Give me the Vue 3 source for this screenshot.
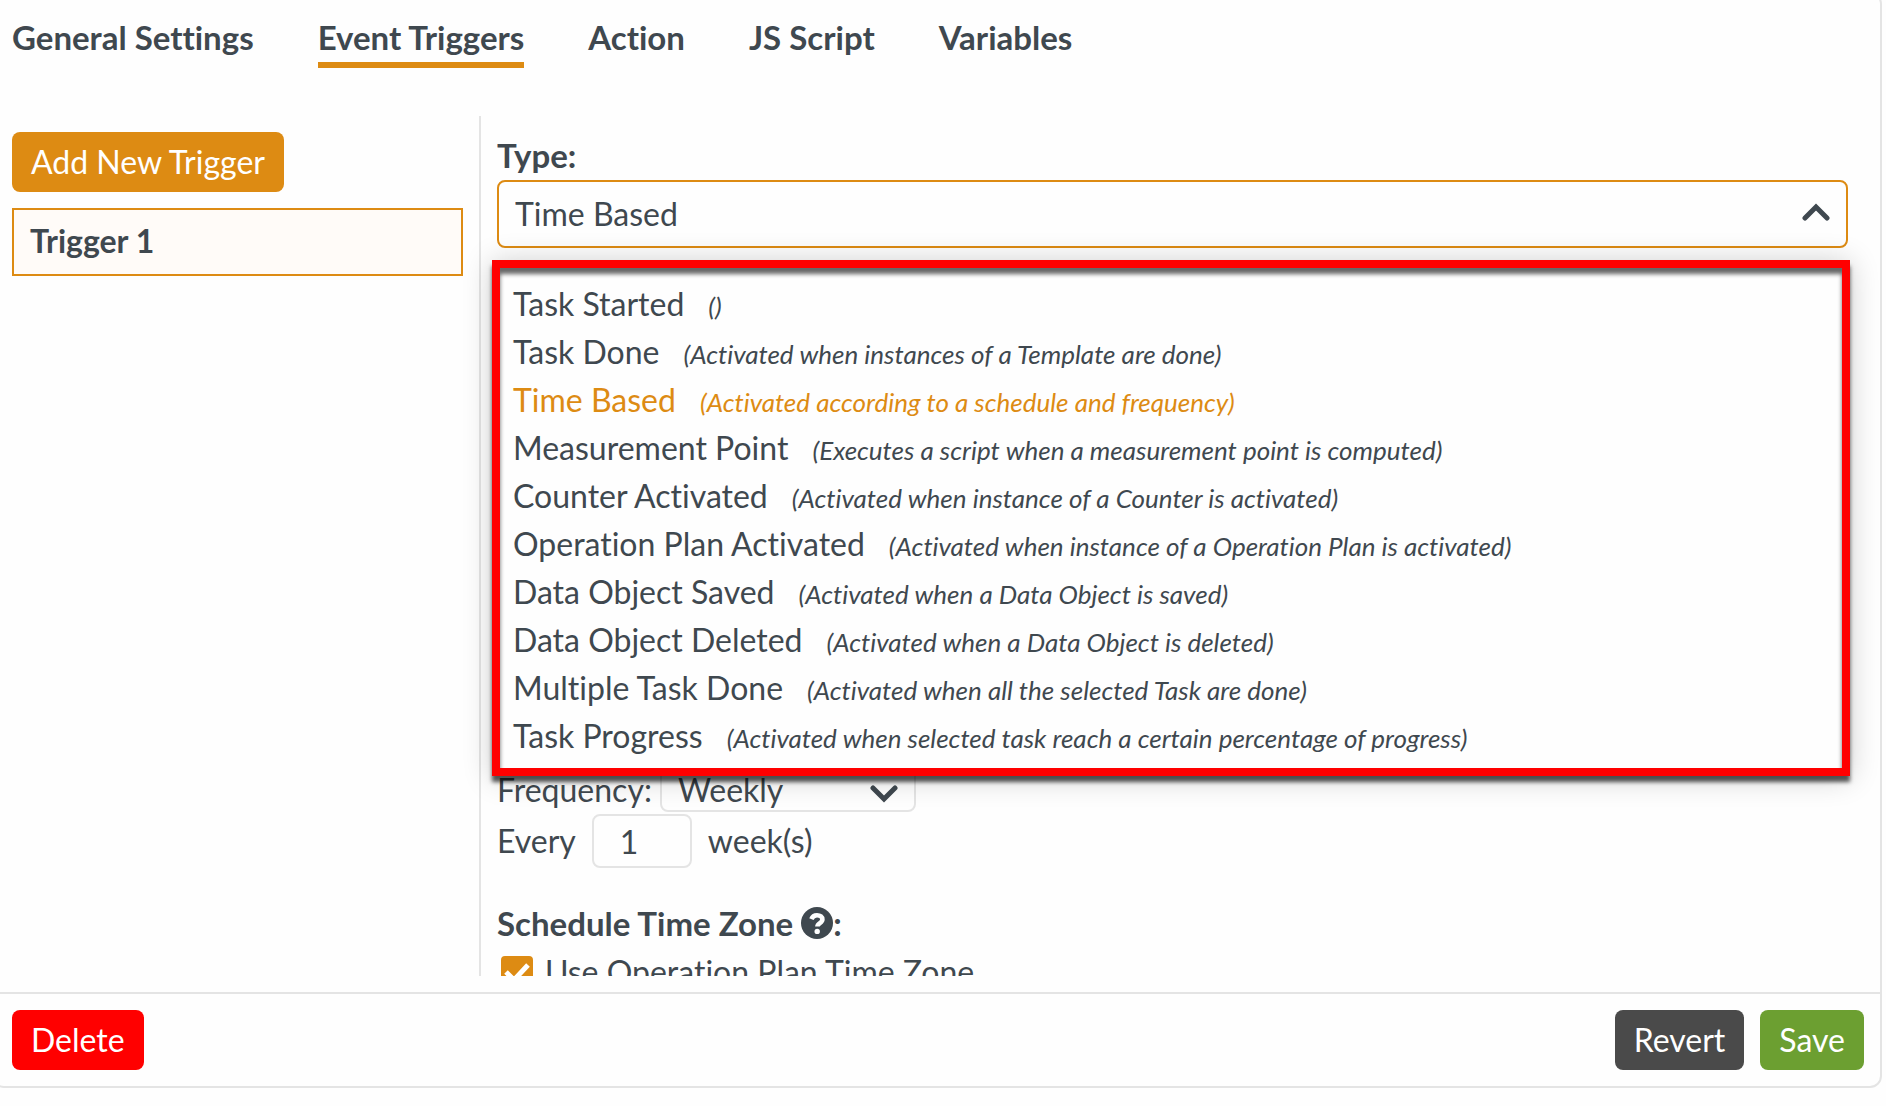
<script setup>
import { ref } from 'vue'

const tabs = ['General Settings', 'Event Triggers', 'Action', 'JS Script', 'Variables']
const activeTab = ref('Event Triggers')

const triggerTypes = [
  { name: 'Task Started', hint: '' },
  { name: 'Task Done', hint: 'Activated when instances of a Template are done' },
  { name: 'Time Based', hint: 'Activated according to a schedule and frequency' },
  { name: 'Measurement Point', hint: 'Executes a script when a measurement point is computed' },
  { name: 'Counter Activated', hint: 'Activated when instance of a Counter is activated' },
  { name: 'Operation Plan Activated', hint: 'Activated when instance of a Operation Plan is activated' },
  { name: 'Data Object Saved', hint: 'Activated when a Data Object is saved' },
  { name: 'Data Object Deleted', hint: 'Activated when a Data Object is deleted' },
  { name: 'Multiple Task Done', hint: 'Activated when all the selected Task are done' },
  { name: 'Task Progress', hint: 'Activated when selected task reach a certain percentage of progress' },
]
const type = ref('Time Based')
const frequency = ref('Weekly')
const every = ref('1')
const usePlanZone = ref(true)
</script>

<template>
  <main class="panel">
    <nav class="tabs">
      <a
        v-for="tab in tabs"
        :key="tab"
        href="#"
        class="tab"
        :class="{ active: tab === activeTab }"
        @click.prevent="activeTab = tab"
      >{{ tab }}</a>
    </nav>

    <div class="body">
      <aside class="sidebar">
        <button type="button" class="btn btn-add">Add New Trigger</button>
        <a href="#" class="trigger">Trigger 1</a>
      </aside>

      <section class="editor">
        <label class="heading" for="type">Type:</label>
        <div class="type-field">
          <select id="type" v-model="type" class="select select-type">
            <option v-for="t in triggerTypes" :key="t.name">{{ t.name }}</option>
          </select>
          <svg class="chevron" viewBox="0 0 28 18" aria-hidden="true">
            <path d="M3 15 14 4l11 11" />
          </svg>
          <ul class="menu" role="listbox" aria-label="Type">
            <li
              v-for="t in triggerTypes"
              :key="t.name"
              class="option"
              :class="{ selected: t.name === type }"
              role="option"
              :aria-selected="t.name === type"
              @click="type = t.name"
            >
              <span>{{ t.name }}</span>
              <em class="hint">({{ t.hint }})</em>
            </li>
          </ul>
        </div>

        <div class="schedule">
          <div class="row row-frequency">
            <label for="frequency">Frequency:</label>
            <div class="select-wrap">
              <select id="frequency" v-model="frequency" class="select select-small">
                <option>Daily</option>
                <option>Weekly</option>
                <option>Monthly</option>
              </select>
              <svg class="chevron chevron-small" viewBox="0 0 28 18" aria-hidden="true">
                <path d="m3 3 11 11L25 3" />
              </svg>
            </div>
          </div>
          <div class="row row-every">
            <label for="every">Every</label>
            <input id="every" v-model="every" type="text" class="number" />
            <span>week(s)</span>
          </div>
        </div>

        <h2 class="heading zone">
          Schedule Time Zone
          <svg class="help" viewBox="0 0 32 32" aria-hidden="true">
            <circle cx="16" cy="16" r="16" />
            <path d="M10.4 12.2C11.4 9.6 13.2 8.2 16 8.2c3.2 0 5.4 1.8 5.4 4.3 0 3.6-5 3.5-5 7" />
            <circle class="dot" cx="16.2" cy="24.4" r="2.7" />
          </svg>:
        </h2>
        <label class="check">
          <input v-model="usePlanZone" type="checkbox" />
          <span>Use Operation Plan Time Zone</span>
        </label>
      </section>
    </div>

    <footer class="footer">
      <button type="button" class="btn btn-delete">Delete</button>
      <div class="footer-right">
        <button type="button" class="btn btn-revert">Revert</button>
        <button type="button" class="btn btn-save">Save</button>
      </div>
    </footer>
  </main>
</template>

<style>
body {
  margin: 0;
  overflow: hidden;
  background: #fefefe;
}
</style>

<style scoped>
.panel {
  box-sizing: border-box;
  height: calc(100vh - 10px);
  margin: -8px 4px 0 -8px;
  border: 2px solid #e4e4e4;
  border-radius: 12px;
  display: flex;
  flex-direction: column;
  background: #fefefe;
  color: #3f484f;
  font: 32px/40px Lato, "Open Sans", sans-serif;
  font-variant-ligatures: none;
}

.tabs {
  display: flex;
  gap: 64px;
  padding: 23px 18px 0;
  font-size: 33px;
  font-weight: 700;
}

.tab {
  padding-bottom: 5px;
  border-bottom: 6px solid transparent;
  color: inherit;
  text-decoration: none;
}

.tab.active {
  border-color: #dd8b13;
}

.body {
  flex: 1;
  min-height: 0;
  display: flex;
  margin-top: 48px;
  overflow: hidden;
}

.sidebar {
  box-sizing: border-box;
  width: 485px;
  flex: none;
  display: flex;
  flex-direction: column;
  align-items: flex-start;
  gap: 16px;
  padding: 16px 16px 0 18px;
}

.btn {
  height: 60px;
  padding: 0 19px;
  border: 0;
  border-radius: 8px;
  color: #fff;
  font: inherit;
  white-space: nowrap;
}

.btn-add {
  background: #dd8b13;
}

.trigger {
  box-sizing: border-box;
  align-self: stretch;
  height: 68px;
  padding: 11px 16px;
  border: 2px solid #dd8b13;
  background: #fffbf8;
  color: inherit;
  font-weight: 700;
  text-decoration: none;
}

.editor {
  flex: 1;
  min-width: 0;
  padding: 19px 32px 0 16px;
  border-left: 2px solid #e4e4e4;
}

.heading {
  display: block;
  margin: 0;
  font-size: 33px;
  font-weight: 700;
}

.type-field {
  position: relative;
  margin-top: 5px;
}

.select {
  box-sizing: border-box;
  display: block;
  width: 100%;
  appearance: none;
  background: #fefefe;
  border: 2px solid #e4e4e4;
  border-radius: 8px;
  color: inherit;
  font: inherit;
}

.select-type {
  height: 68px;
  padding: 0 16px;
  border-color: #dd8b13;
}

.chevron {
  position: absolute;
  top: 23px;
  right: 18px;
  width: 28px;
  height: 18px;
  fill: none;
  stroke: #3f484f;
  stroke-width: 5;
  stroke-linecap: round;
  pointer-events: none;
}

.menu {
  position: absolute;
  z-index: 2;
  top: 80px;
  left: -5px;
  right: -2px;
  margin: 0;
  padding: 12px 13px 8px;
  border: 8px solid #f00;
  background: #fefefe;
  list-style: none;
  box-shadow:
    0 6px 4px rgba(0, 0, 0, 0.65),
    0 2px 28px rgba(0, 0, 0, 0.2),
    inset 0 6px 4px rgba(0, 0, 0, 0.6);
}

.option {
  display: flex;
  align-items: baseline;
  gap: 24px;
  height: 48px;
  line-height: 48px;
  white-space: nowrap;
}

.option.selected {
  color: #dd8b13;
}

.hint {
  font-size: 26px;
}

.schedule {
  margin-top: 520px;
}

.row {
  display: flex;
  align-items: center;
}

.row-frequency {
  gap: 8px;
}

.row-every {
  gap: 16px;
  margin-top: 2px;
}

.select-wrap {
  position: relative;
  width: 256px;
}

.select-small {
  height: 44px;
  padding: 0 16px;
}

.chevron-small {
  top: 17px;
}

.number {
  box-sizing: border-box;
  width: 100px;
  height: 54px;
  padding: 0 26px;
  border: 2px solid #e4e4e4;
  border-radius: 8px;
  background: #fefefe;
  color: inherit;
  font: inherit;
}

.zone {
  display: flex;
  align-items: center;
  margin-top: 35px;
}

.help {
  width: 32px;
  height: 32px;
  margin-left: 8px;
  fill: #3f484f;
}

.help path {
  fill: none;
  stroke: #fefefe;
  stroke-width: 4.6;
}

.help .dot {
  fill: #fefefe;
}

.check {
  display: flex;
  align-items: center;
  gap: 12px;
  margin-top: 9px;
  padding-left: 4px;
}

.check input {
  appearance: none;
  width: 32px;
  height: 32px;
  margin: 0;
  border-radius: 4px;
  border: 2px solid #dd8b13;
}

.check input:checked {
  background: #dd8b13 url("data:image/svg+xml,%3Csvg xmlns='http://www.w3.org/2000/svg' viewBox='0 0 28 28'%3E%3Cpath d='M3 14l8 8L25 7' fill='none' stroke='white' stroke-width='5'/%3E%3C/svg%3E") center / 28px no-repeat;
}

.footer {
  display: flex;
  justify-content: space-between;
  margin-top: 16px;
  padding: 16px 16px 16px 18px;
  border-top: 2px solid #e4e4e4;
}

.footer-right {
  display: flex;
  gap: 16px;
}

.btn-delete {
  background: #f00;
}

.btn-revert {
  background: #4a4a4a;
}

.btn-save {
  background: #6c9f31;
}
</style>
